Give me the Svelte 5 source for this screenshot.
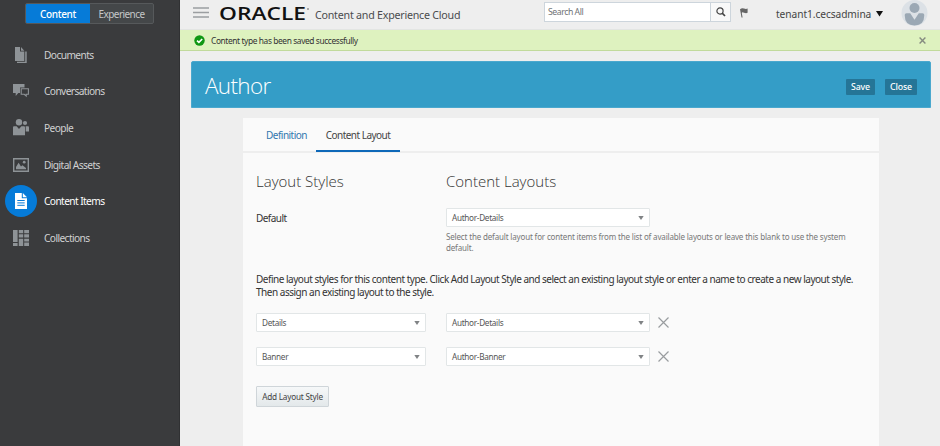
<script>
  const nav = [
    { id: 'documents', label: 'Documents' },
    { id: 'conversations', label: 'Conversations' },
    { id: 'people', label: 'People' },
    { id: 'assets', label: 'Digital Assets' },
    { id: 'items', label: 'Content Items' },
    { id: 'collections', label: 'Collections' }
  ];
  let active = $state('items');
  const rows = [
    { style: 'Details', layout: 'Author-Details' },
    { style: 'Banner', layout: 'Author-Banner' }
  ];
</script>

{#snippet select(value, wide)}
  <button class="select" class:wide>
    <span>{value}</span>
    <svg width="6" height="4" viewBox="0 0 6 4"><path d="M.3 0h5.4L3 4z" fill="#808385" /></svg>
  </button>
{/snippet}

<div class="app">
  <aside>
    <div class="toggle">
      <button class="on">Content</button>
      <button>Experience</button>
    </div>
    <nav>
      {#each nav as item}
        <button class="item" class:active={active === item.id} onclick={() => (active = item.id)}>
          <span class="icon">
            {#if item.id === 'documents'}
              <svg width="16" height="16" viewBox="0 0 16 16" fill="#8e9397">
                <path d="M2 0h5v4.500h4.300V14H2z" /><path d="M8 0l3.300 3.700H8z" />
                <path d="M12.200 4.500h1.500V16H4v-1.200h8.200z" />
              </svg>
            {:else if item.id === 'conversations'}
              <svg width="16" height="14" viewBox="0 0 16 14" fill="#8e9397">
                <path d="M0 0h11.5v3.6H7v5.3H5.3L2.7 12V8.9H0z" />
                <path d="M8.2 4.8h7.2v5.5h-2.2V12l-2-1.7h-3z" fill="none" stroke="#8e9397" stroke-width="1.1" />
              </svg>
            {:else if item.id === 'people'}
              <svg width="16" height="17" viewBox="0 0 16 17" fill="#8e9397">
                <circle cx="6" cy="3.2" r="3.2" /><circle cx="12" cy="4" r="2.1" />
                <path d="M0 8.2q0-1 1-1h2.6L6 10l2.4-2.8H11q1 0 1 1v8H0z" />
                <path d="M12.7 7.2H15q1 0 1 1v4.3h-3.3z" />
              </svg>
            {:else if item.id === 'assets'}
              <svg width="16" height="14" viewBox="0 0 16 14" fill="#8e9397">
                <path d="M.7.7h14.6v12.6H.7z" fill="none" stroke="#8e9397" stroke-width="1.4" />
                <path d="M3 11.3V9l2.6-4.2L8 8.5l1.4-1.2L13 10v1.3z" /><circle cx="11.2" cy="4.2" r="1.4" />
              </svg>
            {:else if item.id === 'items'}
              <svg width="12" height="16" viewBox="0 0 12 16">
                <path d="M0 0h6.8v5.2H12V16H0z" fill="#fff" /><path d="M7.8 0L12 4.3H7.8z" fill="#fff" />
                <path d="M2.3 7.5h7.4M2.3 9.9h7.4M2.3 12.3h7.4" stroke="#0a7ad6" stroke-width="1" />
              </svg>
            {:else}
              <svg width="16" height="16" viewBox="0 0 16 16" fill="#8e9397">
                <path d="M0 0h4.6v12H0zM0 13h4.6v3H0zM5.8 0h4.4v3.2H5.8zM11.2 0H16v3.2h-4.8zM5.8 4.3h4.4v3.3H5.8zM11.2 4.3H16v3.3h-4.8zM5.8 8.7h4.4V16H5.8zM11.2 8.7H16v2.8h-4.8zM11.2 12.5H16V16h-4.8z" />
              </svg>
            {/if}
          </span>
          <span class="label">{item.label}</span>
        </button>
      {/each}
    </nav>
  </aside>

  <div class="page">
    <header>
      <svg class="menu" width="16" height="12" viewBox="0 0 16 12"><path d="M0 1h16M0 5.500h16M0 10h16" stroke="#9b9ea1" stroke-width="1.400" /></svg>
      <svg class="logo" width="92" height="18" viewBox="0 0 92 18">
        <text x="0" y="14.800" textLength="87" lengthAdjust="spacingAndGlyphs">ORACLE</text>
        <circle cx="89" cy="4" r=".8" fill="#555" />
      </svg>
      <span class="product">Content and Experience Cloud</span>
      <div class="search">
        <span>Search All</span>
        <button aria-label="Search">
          <svg width="10" height="10" viewBox="0 0 10 10" fill="none" stroke="#444"><circle cx="4" cy="4" r="3.1" stroke-width="1.2" /><path d="M6.2 6.2L9 9" stroke-width="1.7" /></svg>
        </button>
      </div>
      <svg class="flag" width="8" height="10" viewBox="0 0 8 10" fill="#666"><path d="M0 1.2Q2-.2 4 .6t3.6 0v4.2Q6 5.500 4 4.700T1.800 5L2.600 9.400H1.500z" /></svg>
      <span class="user">tenant1.cecsadmina</span>
      <svg class="caret" width="7" height="6" viewBox="0 0 7 6"><path d="M0 0h7L3.500 5.500z" fill="#111" /></svg>
      <svg class="avatar" width="27" height="27" viewBox="0 0 27 27">
        <circle cx="13.500" cy="13" r="13" fill="#dce1e6" />
        <circle cx="13.500" cy="8" r="5" fill="#9ba8b4" />
        <path d="M3.700 15q0-1.800 1.800-1.800h3.700l4.300 6.500 4.300-6.500h3.700q1.800 0 1.800 1.800 0 10.500-9.800 10.500T3.700 15z" fill="#9ba8b4" />
      </svg>
    </header>

    <div class="notice">
      <svg width="11" height="11" viewBox="0 0 11 11"><circle cx="5.500" cy="5.500" r="5.200" fill="#0f9713" /><path d="M3 5.600l1.900 1.800L8.200 4" fill="none" stroke="#fff" stroke-width="1.600" /></svg>
      <span>Content type has been saved successfully</span>
      <svg class="dismiss" width="7" height="7" viewBox="0 0 7 7"><path d="M.6.6l5.800 5.800M6.400.6L.6 6.400" stroke="#858b80" stroke-width="1.400" /></svg>
    </div>

    <section class="banner">
      <h1>Author</h1>
      <button class="save">Save</button>
      <button class="close">Close</button>
    </section>

    <main>
      <div class="tabs">
        <button class="definition">Definition</button>
        <button class="current">Content Layout</button>
      </div>
      <div class="body">
        <div class="grid heads">
          <h2>Layout Styles</h2>
          <h2>Content Layouts</h2>
        </div>
        <div class="grid defaults">
          <span class="default">Default</span>
          <div>
            {@render select('Author-Details', true)}
            <p class="hint">Select the default layout for content items from the list of available layouts or leave this blank to use the system<br />default.</p>
          </div>
        </div>
        <p class="intro">Define layout styles for this content type. Click Add Layout Style and select an existing layout style or enter a name to create a new layout style.<br />Then assign an existing layout to the style.</p>
        {#each rows as row}
          <div class="grid row">
            {@render select(row.style, false)}
            {@render select(row.layout, true)}
            <svg class="remove" width="11" height="11" viewBox="0 0 11 11"><path d="M.5.5l10 10M10.500.5l-10 10" stroke="#999c9f" stroke-width="1.200" /></svg>
          </div>
        {/each}
        <button class="add">Add Layout Style</button>
      </div>
    </main>
  </div>
</div>

<style>
  :global(body) { margin: 0; overflow: hidden; }
  .app { display: flex; width: 940px; height: 446px; background: #eee; font-family: "Noto Sans", "Open Sans", sans-serif; color: #333; overflow: hidden; }
  .app * { box-sizing: border-box; }
  button { font: inherit; color: inherit; margin: 0; padding: 0; border: 0; background: none; white-space: nowrap; letter-spacing: inherit; }
  svg { display: block; flex: none; }
  h1, h2, p { margin: 0; font-weight: 300; white-space: nowrap; }
  aside { width: 180px; flex: none; background: #3a3b3d; border-right: 1px solid #303133; }
  .toggle { display: flex; width: 129px; height: 21px; margin: 3px 0 0 25px; border: 1px solid #56595b; border-radius: 2px; background: #444749; overflow: hidden; font-size: 10px; letter-spacing: -0.550px; color: #c4c6c8; }
  .toggle button { flex: 1; }
  .toggle .on { flex: none; width: 64px; background: #067bd8; color: #fff; font-weight: 500; font-size: 10px; letter-spacing: -0.350px; }
  nav { display: flex; flex-direction: column; margin-top: 12.500px; }
  .item { display: flex; align-items: center; height: 36.600px; text-align: left; color: #d0d1d2; font-size: 10.200px; }
  .icon { display: flex; align-items: center; justify-content: center; width: 32px; height: 32px; margin-left: 5px; border-radius: 50%; }
  .active { color: #fff; }
  .active .icon { background: #067bd8; }
  .label { margin-left: 7px; letter-spacing: -0.600px; }
  .page { flex: 1; min-width: 0; }
  header { display: flex; height: 30px; border-bottom: 1px solid #e3e5e3; }
  .menu { margin: 7px 0 0 13px; }
  .logo { margin: 5px 0 0 10px; overflow: visible; }
  .logo text { font: 600 17.500px "Open Sans", sans-serif; fill: #111; }
  .product { width: 145px; margin: 7px 0 0 4px; font-size: 10.700px; line-height: 17px; white-space: nowrap; color: #4a4c4e; letter-spacing: -0.240px; }
  .search { display: flex; width: 187px; height: 20px; margin: 2px 0 0 84px; border: 1px solid #cdd5dc; background: #fff; font-size: 8.700px; line-height: 19px; color: #707376; }
  .search span { flex: 1; padding-left: 3px; letter-spacing: -0.450px; }
  .search button { display: flex; width: 20px; align-items: center; justify-content: center; border-left: 1px solid #cdd5dc; background: #f9f9f9; }
  .flag { margin: 8px 0 0 9px; }
  .user { width: 96px; margin: 6px 0 0 28px; font-size: 10.200px; line-height: 17px; white-space: nowrap; color: #444; letter-spacing: -0.070px; }
  .caret { margin: 11px 0 0 4px; }
  .avatar { margin: 0 0 0 18px; }
  .notice { display: flex; align-items: center; height: 21px; background: #def2bf; border-bottom: 1px solid #c1da9c; padding-left: 14px; font-size: 8.400px; color: #333; }
  .notice span { margin-left: 6px; letter-spacing: -0.400px; }
  .dismiss { margin-left: auto; margin-right: 14px; }
  .banner { display: flex; align-items: center; width: 740px; height: 47px; margin: 10px 0 0 11px; padding: 2px 14px 0 13px; background: #349dc7; border: 1px solid #4aa8ce; border-radius: 2px 2px 0 0; color: #fff; }
  h1 { flex: 1; font-family: "Open Sans", sans-serif; font-size: 22.500px; line-height: 40px; letter-spacing: -0.650px; }
  .banner button { height: 16px; margin-top: 3px; background: #257597; border-radius: 1px; font-size: 8.800px; letter-spacing: -0.150px; font-weight: 500; }
  .save { width: 29px; }
  .close { width: 32px; margin-left: 10px; }
  .banner .close { margin-right: -1px; }
  main { width: 636px; height: 328px; margin: 10px 0 0 63px; background: #fafafa; }
  .tabs { display: flex; height: 35px; border-bottom: 2px solid #eee; font-size: 10px; letter-spacing: -0.520px; }
  .tabs button { height: 34px; }
  .definition { margin-left: 23px; width: 41px; color: #3277ae; }
  .tabs .current { margin-left: 9px; width: 84px; border-bottom: 2px solid #0e68b8; padding-top: 1px; color: #444; }
  .body { padding: 17px 0 0 13px; }
  .grid { display: grid; grid-template-columns: 190px 204px 30px; }
  h2 { font-family: "Open Sans", sans-serif; font-size: 15px; line-height: 22px; color: #333; }
  .defaults { margin-top: 16px; }
  .default { font-size: 10px; line-height: 20px; letter-spacing: -0.550px; }
  .select { display: flex; align-items: center; justify-content: space-between; width: 170px; height: 19px; padding: 0 5px; border: 1px solid #e2e6e7; border-radius: 1px; background: #fff; font-size: 8.200px; color: #555; letter-spacing: -0.300px; }
  .wide { width: 204px; }
  .hint { margin-top: 4px; font-size: 8px; font-weight: 400; line-height: 11px; color: #777; letter-spacing: -0.160px; }
  .intro { margin-top: 20px; font-size: 10px; font-weight: 400; line-height: 13px; letter-spacing: -0.480px; }
  .row { margin-top: 14px; align-items: center; }
  .row + .row { margin-top: 15px; }
  .remove { margin-left: 8px; }
  .add { width: 73px; height: 21px; margin-top: 20px; border: 1px solid #cfd5d9; border-radius: 1px; background: linear-gradient(#f6f8f9, #e3e8ea); font-size: 8.200px; color: #444; letter-spacing: -0.200px; }
</style>
